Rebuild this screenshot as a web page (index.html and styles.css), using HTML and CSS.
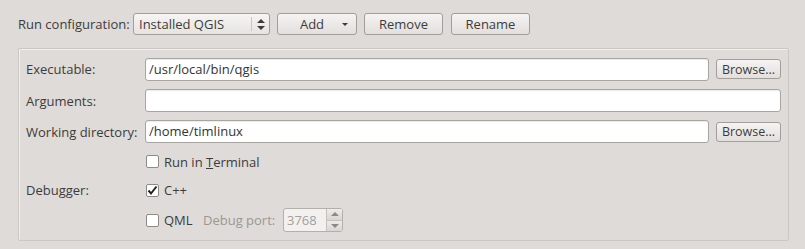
FILE: index.html
```html
<!DOCTYPE html>
<html lang="en">
<head>
    <meta charset="UTF-8">
    <title>Run Settings</title>
    <link rel="stylesheet" href="styles.css">
</head>
<body>
    <div class="run-bar">
        <span class="label">Run configuration:</span>
        <div class="combo">
            <span class="combo-text">Installed QGIS</span>
            <span class="combo-arrows">
                <svg width="8" height="11" viewBox="0 0 8 11"><path d="M4 0 L8 4 H0 Z M0 7 H8 L4 11 Z" fill="#3c3c3c"/></svg>
            </span>
        </div>
        <button class="btn btn-add">Add <span class="caret"></span></button>
        <button class="btn btn-wide">Remove</button>
        <button class="btn btn-wide">Rename</button>
    </div>

    <div class="panel">
        <span class="label">Executable:</span>
        <div class="field">/usr/local/bin/qgis</div>
        <button class="btn btn-browse">Browse...</button>

        <span class="label">Arguments:</span>
        <div class="field field-span"></div>

        <span class="label">Working directory:</span>
        <div class="field">/home/timlinux</div>
        <button class="btn btn-browse">Browse...</button>

        <!-- run in terminal -->
        <label class="check row-full">
            <span class="box"></span>
            <span>Run in <u>T</u>erminal</span>
        </label>

        <span class="label">Debugger:</span>
        <label class="check row-full">
            <span class="box">
                <svg width="11" height="11" viewBox="0 0 11 11"><path d="M1.5 5.5 L4 8.5 L9.5 1.5" fill="none" stroke="#222" stroke-width="2"/></svg>
            </span>
            <span>C++</span>
        </label>

        <div class="check-line row-full">
            <label class="check">
                <span class="box"></span>
                <span>QML</span>
            </label>
            <span class="muted">Debug port:</span>
            <div class="spin">
                <span class="spin-text">3768</span>
                <span class="spin-btns">
                    <span class="spin-up"></span>
                    <span class="spin-down"></span>
                </span>
            </div>
        </div>
    </div>
</body>
</html>
```

FILE: styles.css
```css
body {
    margin: 0;
    padding: 13px 16px 0 18px;
    background-color: #dfdbd8;
    font-family: "Open Sans", "Liberation Sans", sans-serif;
    font-size: 13px;
    color: #3c3c3c;
}
.run-bar {
    display: flex;
    align-items: center;
    height: 22px;
}
.run-bar .label {
    width: 115px;
}
.combo {
    display: flex;
    align-items: center;
    width: 135px;
    height: 20px;
    border: 1px solid #a29e9a;
    border-radius: 3px;
    background: linear-gradient(#f6f5f4, #e6e3e0);
}
.combo-text {
    flex: 1;
    padding-left: 5px;
}
.combo-arrows {
    display: flex;
    align-items: center;
    justify-content: center;
    width: 17px;
    height: 14px;
    border-left: 1px solid #c9c5c1;
}
.btn {
    height: 22px;
    border: 1px solid #a29e9a;
    border-radius: 3px;
    background: linear-gradient(#f5f4f3, #e2dfdc);
    font-family: inherit;
    font-size: 13px;
    color: #3c3c3c;
    padding: 0;
}
.run-bar .btn {
    margin-left: 7px;
}
.btn-add {
    position: relative;
    width: 80px;
    padding-right: 10px;
}
/* small dropdown triangle */
.caret {
    position: absolute;
    right: 8px;
    top: 9px;
    border-left: 3px solid transparent;
    border-right: 3px solid transparent;
    border-top: 3px solid #3c3c3c;
}
.btn-wide {
    width: 79px;
}
.run-bar .btn-wide:last-child {
    margin-left: 8px;
}
.panel {
    margin-top: 13px;
    border: 1px solid #cbc7c3;
    box-shadow: inset 1px 1px 0 #f2f0ee;
    border-radius: 2px;
    padding: 8px 7px 8px 7px;
    display: grid;
    grid-template-columns: 112px 1fr 65px;
    grid-template-rows: 24px 23px 23px 21px 20px 24px;
    column-gap: 7px;
    row-gap: 8px;
    align-items: center;
}
.panel .label {
    grid-column: 1;
}
.field {
    grid-column: 2;
    height: 21px;
    line-height: 21px;
    border: 1px solid #a8a49f;
    border-radius: 3px;
    background: #fff;
    box-shadow: inset 0 1px 1px rgba(0,0,0,0.08);
    padding-left: 3px;
    color: #333;
}
.field-span {
    grid-column: 2 / 4;
}
.btn-browse {
    grid-column: 3;
    height: 20px;
    font-size: 12.5px;
}
.row-full {
    grid-column: 2 / 4;
}
.check {
    display: flex;
    align-items: center;
    gap: 5px;
    padding-left: 1px;
}
.box {
    display: flex;
    align-items: center;
    justify-content: center;
    width: 11px;
    height: 11px;
    border: 1px solid #8f8a85;
    border-radius: 2px;
    background: #fff;
}
.check-line {
    display: flex;
    align-items: center;
}
.check-line .check {
    width: 57px;
}
.muted {
    color: #9b9894;
    width: 80px;
}
.spin {
    display: flex;
    width: 58px;
    height: 22px;
    border: 1px solid #b3afab;
    border-radius: 3px;
    background: #f2f1f0;
}
.spin-text {
    flex: 1;
    line-height: 22px;
    padding-left: 3px;
    color: #a3a09c;
}
.spin-btns {
    display: flex;
    flex-direction: column;
    width: 15px;
    border-left: 1px solid #c4c0bc;
}
.spin-up, .spin-down {
    flex: 1;
    position: relative;
    background: linear-gradient(#eeecea, #d8d5d2);
}
.spin-up {
    border-bottom: 1px solid #c4c0bc;
}
.spin-up::after, .spin-down::after {
    content: "";
    position: absolute;
    left: 4px;
    top: 3px;
    border-left: 4px solid transparent;
    border-right: 4px solid transparent;
}
.spin-up::after {
    border-bottom: 4px solid #8d8a86;
}
.spin-down::after {
    border-top: 4px solid #8d8a86;
}
```
